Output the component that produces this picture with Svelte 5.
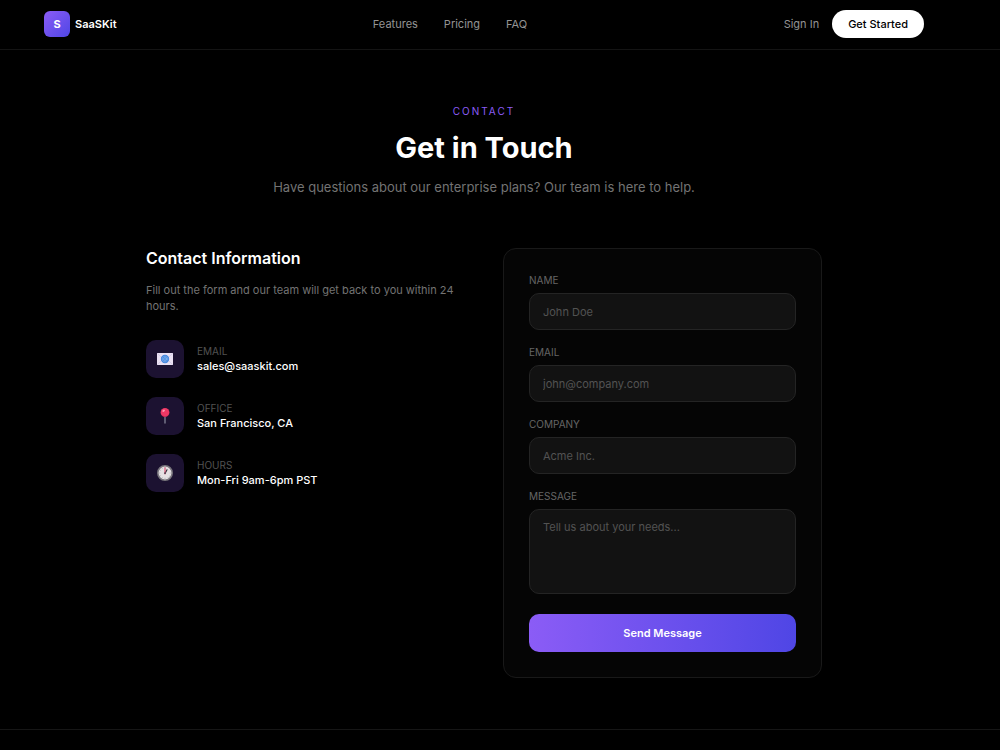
<script lang="ts">
  const links = ["Features", "Pricing", "FAQ"];

  const contacts = [
    { icon: "email", label: "Email", value: "sales@saaskit.com" },
    { icon: "office", label: "Office", value: "San Francisco, CA" },
    { icon: "hours", label: "Hours", value: "Mon-Fri 9am-6pm PST" },
  ];

  const fields = [
    { id: "name", label: "Name", type: "text", placeholder: "John Doe" },
    { id: "email", label: "Email", type: "email", placeholder: "john@company.com" },
    { id: "company", label: "Company", type: "text", placeholder: "Acme Inc." },
  ];
</script>

<div class="page">
  <header>
    <div class="bar">
      <a class="brand" href="#home"><span class="logo">S</span>SaaSKit</a>
      <nav>
        {#each links as link}
          <a href="#{link.toLowerCase()}">{link}</a>
        {/each}
      </nav>
      <div class="actions">
        <a href="#signin">Sign In</a>
        <button type="button" class="pill">Get Started</button>
      </div>
    </div>
  </header>

  <main>
    <div class="intro">
      <p class="eyebrow">Contact</p>
      <h1>Get in Touch</h1>
      <p class="lead">Have questions about our enterprise plans? Our team is here to help.</p>
    </div>

    <div class="columns">
      <section class="info">
        <h2>Contact Information</h2>
        <p>Fill out the form and our team will get back to you within 24 hours.</p>
        <ul>
          {#each contacts as contact}
            <li>
              <span class="icon">
                <svg viewBox="0 0 16 16" aria-hidden="true">
                  {#if contact.icon === "email"}
                    <rect x="0" y="2" width="16" height="12" fill="#e9e0f2" />
                    <path d="M0 14 6 8M16 14l-6-6M0 2l6 6M16 2l-6 6" stroke="#cbbfdf" stroke-width=".6" />
                    <circle cx="8" cy="8" r="4.2" fill="#4285dc" />
                    <circle cx="8" cy="8" r="1.4" fill="none" stroke="#8dbbf0" stroke-width=".7" />
                    <path d="M9.4 6.6v2c0 1.2 1.4.8 1.4-.6A2.8 2.8 0 1 0 9.5 10.4" fill="none" stroke="#8dbbf0" stroke-width=".6" />
                  {:else if contact.icon === "office"}
                    <path d="M7.4 7h1.2v8l-.6 1-.6-1z" fill="#8c8da0" />
                    <circle cx="8" cy="4.4" r="4.4" fill="#ed3864" />
                    <path d="M4 6.2a4.4 4.4 0 0 0 8 0 5 5 0 0 1-8 0z" fill="#c51f50" />
                    <ellipse cx="6.6" cy="2.8" rx="1.4" ry="1" fill="#ff9ab5" transform="rotate(-35 6.6 2.8)" />
                  {:else}
                    <circle cx="8" cy="8" r="7.2" fill="#e5e1e3" stroke="#77747b" stroke-width="1.6" />
                    <path d="M8 2v1.2M8 12.8V14M2 8h1.2M12.8 8H14M5 2.8l.5 1M11 12.2l.5 1M2.8 5l1 .5M12.2 11l1 .5M2.8 11l1-.5M5 13.2l.5-1" stroke="#a5a1a8" stroke-width=".6" />
                    <path d="M8 8.4 10 4.8" stroke="#34313c" stroke-width="1.2" stroke-linecap="round" />
                    <path d="M8 9V2.8" stroke="#d83b62" stroke-width="1" stroke-linecap="round" />
                    <circle cx="8" cy="8.2" r=".9" fill="#57505d" />
                  {/if}
                </svg>
              </span>
              <div>
                <span class="caption">{contact.label}</span>
                <span class="value">{contact.value}</span>
              </div>
            </li>
          {/each}
        </ul>
      </section>

      <form onsubmit={(e) => e.preventDefault()}>
        {#each fields as field}
          <div class="field">
            <label for={field.id}>{field.label}</label>
            <input id={field.id} type={field.type} placeholder={field.placeholder} />
          </div>
        {/each}
        <div class="field">
          <label for="message">Message</label>
          <textarea id="message" placeholder="Tell us about your needs..."></textarea>
        </div>
        <button type="submit" class="send">Send Message</button>
      </form>
    </div>
  </main>

  <footer></footer>
</div>

<style>
  :global(body) {
    background: #000;
  }

  .page {
    min-height: 100vh;
    display: flex;
    flex-direction: column;
    box-sizing: border-box;
    overflow: hidden;
    background: #000;
    color: #fff;
    font-family: Inter, sans-serif;
    font-size: 11px;
    line-height: 16px;
  }

  .page * {
    box-sizing: border-box;
  }

  h1,
  h2,
  p,
  ul {
    margin: 0;
    padding: 0;
  }

  a {
    color: #949494;
    text-decoration: none;
  }

  button {
    border: 0;
    font: inherit;
    cursor: pointer;
  }

  header {
    padding: 10px 76px 11px 44px;
    border-bottom: 1px solid #141414;
  }

  .bar {
    display: grid;
    grid-template-columns: 1fr auto 1fr;
    align-items: center;
    max-width: 1024px;
    margin: 0 auto;
  }

  .brand {
    display: flex;
    align-items: center;
    gap: 5px;
    color: #fff;
    font-weight: 600;
  }

  .logo {
    display: grid;
    place-items: center;
    width: 26px;
    height: 26px;
    border-radius: 6px;
    background: linear-gradient(135deg, #8b5cf6, #4f46e5);
    font-weight: 700;
  }

  nav {
    display: flex;
    gap: 26px;
    padding-right: 68px;
  }

  .actions {
    display: flex;
    align-items: center;
    justify-content: flex-end;
    gap: 13px;
  }

  .pill {
    padding: 6px 16px;
    border-radius: 15px;
    background: #fff;
    color: #000;
    font-weight: 500;
  }

  main {
    width: 100%;
    max-width: 854px;
    margin: 0 auto;
    padding: 53px 105px 51px 73px;
  }

  .intro {
    text-align: center;
  }

  .eyebrow {
    color: #8b5cf6;
    font-size: 10px;
    letter-spacing: 2px;
    text-transform: uppercase;
  }

  h1 {
    margin: 10px 0;
    font-size: 29px;
    line-height: 38px;
    font-weight: 700;
  }

  .lead {
    color: #737373;
    font-size: 13px;
    line-height: 20px;
  }

  .columns {
    display: grid;
    grid-template-columns: 1fr 1fr;
    gap: 38px;
    margin-top: 51px;
  }

  h2 {
    font-size: 16px;
    line-height: 20px;
    font-weight: 600;
  }

  .info p {
    margin: 14px 0 26px;
    color: #737373;
  }

  ul {
    display: grid;
    gap: 19px;
    list-style: none;
  }

  li {
    display: flex;
    align-items: center;
    gap: 13px;
  }

  .icon {
    display: grid;
    place-items: center;
    width: 38px;
    height: 38px;
    border-radius: 10px;
    background: #1c1231;
  }

  .icon svg {
    width: 16px;
    height: 16px;
  }

  .caption,
  .value {
    display: block;
  }

  .caption,
  label {
    font-size: 10px;
    line-height: 14px;
    text-transform: uppercase;
  }

  .caption {
    color: #525252;
  }

  .value {
    font-weight: 500;
  }

  form {
    padding: 24px 25px 25px;
    border: 1px solid #191919;
    border-radius: 13px;
    background: #050505;
  }

  .field {
    display: flex;
    flex-direction: column;
    gap: 6px;
    margin-bottom: 15px;
  }

  label {
    color: #666;
  }

  input,
  textarea {
    width: 100%;
    height: 37px;
    padding: 9px 13px;
    border: 1px solid #242424;
    border-radius: 10px;
    background: #121212;
    color: #fff;
    font: inherit;
    resize: none;
  }

  textarea {
    height: 85px;
  }

  input::placeholder,
  textarea::placeholder {
    color: #525252;
  }

  .send {
    width: 100%;
    height: 38px;
    margin-top: 5px;
    border-radius: 10px;
    background: linear-gradient(90deg, #8b5cf6, #4f46e5);
    color: #fff;
    font-weight: 600;
  }

  footer {
    flex: 1;
    border-top: 1px solid #161616;
  }
</style>
